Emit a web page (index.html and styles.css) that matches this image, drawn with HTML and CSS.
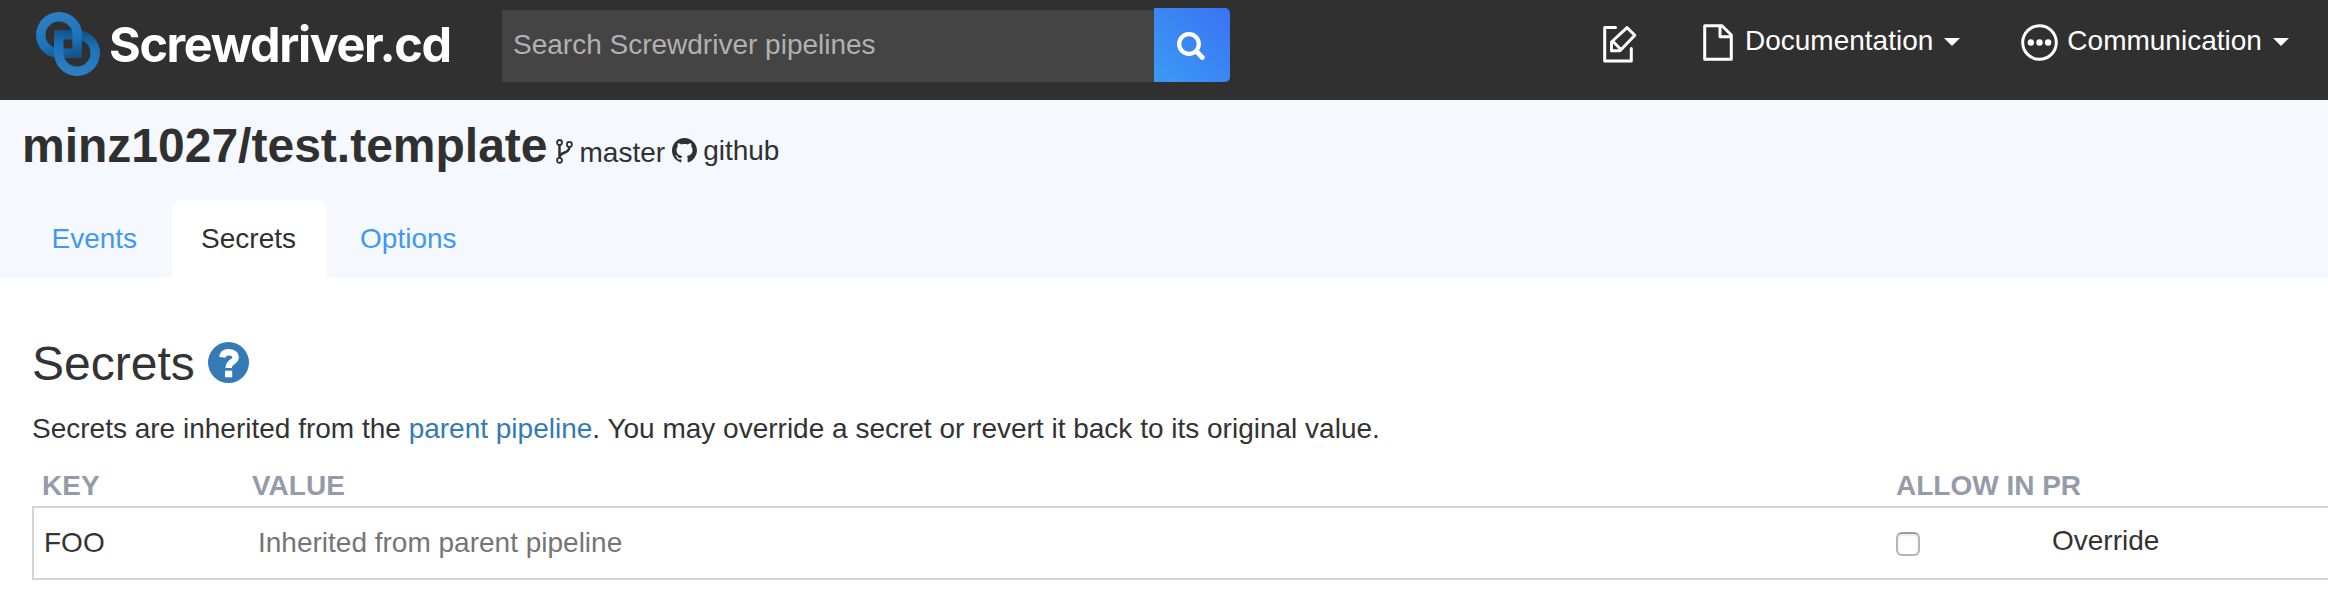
FILE: index.html
```html
<!DOCTYPE html>
<html lang="en">
<head>
<meta charset="utf-8">
<title>Screwdriver.cd</title>
<link rel="stylesheet" href="styles.css">
</head>
<body>
<header class="navbar">
  <a class="brand">
    <svg class="brand-mark" viewBox="36 12 64 64" width="64" height="64">
      <defs>
        <linearGradient id="ringA" gradientUnits="userSpaceOnUse" x1="54" y1="12" x2="68" y2="60">
          <stop offset="0" stop-color="#2f80c3"/><stop offset=".6" stop-color="#1b74bc"/><stop offset="1" stop-color="#125083"/>
        </linearGradient>
        <linearGradient id="ringB" gradientUnits="userSpaceOnUse" x1="77" y1="30" x2="73" y2="76">
          <stop offset="0" stop-color="#125083"/><stop offset=".38" stop-color="#1b74bc"/><stop offset="1" stop-color="#2f80c3"/>
        </linearGradient>
        <clipPath id="crossing"><rect x="72" y="20" width="11" height="25"/></clipPath>
        <path id="link" fill-rule="evenodd" d="M59 12A23 23 0 0 1 82 35V58H59A23 23 0 0 1 59 12ZM59 21.5A13.5 13.5 0 0 0 59 48.5H72.5V35A13.5 13.5 0 0 0 59 21.5Z"/>
      </defs>
      <use href="#link" fill="url(#ringA)"/>
      <path fill="url(#ringB)" fill-rule="evenodd" d="M77 76A23 23 0 0 1 54 53V30H77A23 23 0 0 1 77 76ZM77 66.5A13.5 13.5 0 0 0 77 39.5H63.5V53A13.5 13.5 0 0 0 77 66.5Z"/>
      <use href="#link" fill="url(#ringA)" clip-path="url(#crossing)"/>
    </svg>
    <span class="brand-name">Screwdriver.cd</span>
  </a>
  <form class="search">
    <div class="search-field">Search Screwdriver pipelines</div>
    <div class="search-button">
      <svg viewBox="0 0 28 28" width="28" height="28" fill="none" stroke="#fff" stroke-linecap="round">
        <circle cx="12" cy="12" r="9.8" stroke-width="4.2"/><path d="M19.5 19.5L25.3 25.5" stroke-width="4.8"/>
      </svg>
    </div>
  </form>
  <nav class="menu">
    <a class="menu-create">
      <svg viewBox="0 0 34 38" width="34" height="38" fill="none" stroke="#fff" stroke-width="3" stroke-linecap="round" stroke-linejoin="round">
        <path d="M12.5 2.5H1.7V36H28.3V23.5M8.5 25.7V17L24 2.6L31.8 10.2L17 25.7ZM10 16.5L18 24.5"/>
      </svg>
    </a>
    <a class="menu-item menu-docs">
      <svg class="menu-icon" viewBox="0 0 30 37" width="30" height="37" fill="none" stroke="#fff" stroke-width="3" stroke-linejoin="round">
        <path d="M1.7 1.7H19L28.3 11V35.2H1.7ZM17 2V12.8H28"/>
      </svg>
      <span>Documentation</span><i class="caret"></i>
    </a>
    <a class="menu-item menu-comm">
      <svg class="menu-icon" viewBox="0 0 37 37" width="37" height="37" fill="#fff">
        <circle cx="18.5" cy="18.5" r="16.8" fill="none" stroke="#fff" stroke-width="3"/>
        <circle cx="9.9" cy="18.5" r="3.2"/><circle cx="18.5" cy="18.5" r="3.2"/><circle cx="27.1" cy="18.5" r="3.2"/>
      </svg>
      <span>Communication</span><i class="caret"></i>
    </a>
  </nav>
</header>

<section class="pipeline">
  <div class="pipeline-head">
    <h1 class="pipeline-name">minz1027/test.template</h1>
    <svg class="branch-icon" viewBox="0 0 17 25" width="17" height="25" fill="none" stroke="#303030">
      <g stroke-width="1.8"><circle cx="3.5" cy="3.5" r="2.5"/><circle cx="3.5" cy="21.3" r="2.5"/><circle cx="13.4" cy="5.4" r="2.5"/></g>
      <path d="M3.5 6.3V18.6M13.3 8.2C13.3 15.5 4 12 3.7 18" stroke-width="2.5"/>
    </svg>
    <span class="branch">master</span>
    <svg class="scm-icon" viewBox="0 0 16 16" width="25" height="25" fill="#303030">
      <path d="M8 0C3.58 0 0 3.58 0 8c0 3.54 2.29 6.53 5.47 7.59.4.07.55-.17.55-.38 0-.19-.01-.82-.01-1.49-2.01.37-2.53-.49-2.69-.94-.09-.23-.48-.94-.82-1.13-.28-.15-.68-.52-.01-.53.63-.01 1.08.58 1.23.82.72 1.21 1.87.87 2.33.66.07-.52.28-.87.51-1.07-1.78-.2-3.64-.89-3.64-3.95 0-.87.31-1.59.82-2.15-.08-.2-.36-1.02.08-2.12 0 0 .67-.21 2.2.82.64-.18 1.32-.27 2-.27s1.36.09 2 .27c1.53-1.04 2.2-.82 2.2-.82.44 1.1.16 1.92.08 2.12.51.56.82 1.27.82 2.15 0 3.07-1.87 3.75-3.65 3.95.29.25.54.73.54 1.48 0 1.07-.01 1.93-.01 2.2 0 .21.15.46.55.38A8.01 8.01 0 0 0 16 8c0-4.42-3.58-8-8-8z"/>
    </svg>
    <span class="scm">github</span>
  </div>
  <div class="tabs">
    <a class="tab">Events</a>
    <a class="tab tab-active">Secrets</a>
    <a class="tab">Options</a>
  </div>
</section>

<main class="secrets">
  <div class="secrets-head">
    <h2 class="secrets-title">Secrets</h2>
    <svg class="help-icon" viewBox="0 0 41 41" width="41" height="41">
      <circle cx="20.5" cy="20.5" r="20.5" fill="#337ab7"/>
      <path d="M14.4 15.4C14.8 11.6 17.2 10.2 20.6 10.2C24.8 10.2 27.6 12.2 27.6 15.4C27.6 20 20.6 19.6 20.6 26" fill="none" stroke="#fff" stroke-width="6.4"/>
      <rect x="17" y="28.7" width="7.2" height="6.6" fill="#fff"/>
    </svg>
  </div>
  <p class="secrets-text">Secrets are inherited from the <a class="link">parent pipeline</a>. You may override a secret or revert it back to its original value.</p>
  <div class="grid grid-head">
    <span>KEY</span><span>VALUE</span><span>ALLOW IN PR</span>
  </div>
  <div class="grid grid-row">
    <span class="cell-key">FOO</span>
    <span class="cell-value">Inherited from parent pipeline</span>
    <span class="cell-allow"><i class="checkbox"></i></span>
    <span class="cell-action">Override</span>
  </div>
</main>
</body>
</html>
```
FILE: styles.css
```css
* { box-sizing: border-box; }
html { overflow: hidden; }
body {
  margin: 0;
  font: 28px/40px "Liberation Sans", Arial, sans-serif;
  color: #303030;
  background: #fff;
  white-space: nowrap;
  overflow: hidden;
}
svg { display: block; flex: none; }
h1, h2, p { margin: 0; }

.navbar {
  display: flex;
  align-items: flex-start;
  height: 100px;
  background: #303030;
  color: #fff;
}
.brand { display: flex; width: 502px; padding: 12px 0 0 36px; }
.brand-name {
  margin: 3px 0 0 9px;
  font: bold 48.5px/60px Inter, sans-serif;
  letter-spacing: -1.35px;
}
.search { display: flex; align-items: flex-end; margin-top: 8px; }
.search-field {
  width: 652px;
  height: 72px;
  padding-left: 11px;
  line-height: 69px;
  background: #444;
  color: #b1b1b1;
}
.search-button {
  width: 76px;
  height: 74px;
  padding: 24px 0 0 23px;
  border-radius: 0 5px 5px 0;
  background: linear-gradient(45deg, #3c9bf4, #3a72f3);
}
.menu { display: flex; flex: 1; align-items: flex-start; }
.menu-create { margin: 25px 0 0 373px; }
.menu-item { display: flex; align-items: flex-start; margin-top: 21px; }
.menu-icon { margin-top: 3px; }
.menu-docs { margin-left: 66px; }
.menu-docs span { margin-left: 12px; }
.menu-comm { margin-left: 61px; }
.menu-comm span { margin-left: 9px; }
.caret {
  margin: 17px 0 0 11px;
  border: 8px solid transparent;
  border-top-color: #fff;
  border-bottom: 0;
}

.pipeline { height: 178px; background: #f5f8ff; }
.pipeline-head { display: flex; align-items: flex-start; height: 100px; padding-left: 22px; }
.pipeline-name { margin-top: 19px; font-size: 48px; line-height: 53px; }
.branch-icon { margin: 39px 0 0 8px; }
.branch { margin: 33px 0 0 7px; }
.scm-icon { margin: 38px 0 0 7px; }
.scm { margin: 31px 0 0 6px; }
.tabs { display: flex; gap: 5px; padding-left: 22px; }
.tab {
  height: 78px;
  padding: 19px 29.5px 0;
  border-radius: 8px 8px 0 0;
  color: #3f98f1;
}
.tab-active { background: #fff; color: #303030; }

.secrets { padding: 59px 0 0 32px; color: #333; }
.secrets-head { display: flex; align-items: flex-start; }
.secrets-title { font-size: 48px; font-weight: normal; line-height: 53px; }
.help-icon { margin: 5px 0 0 13px; }
.secrets-text { margin-top: 19px; }
.link { color: #337ab7; }
.grid { display: grid; grid-template-columns: 220px 1642px 156px 1fr; }
.grid-head {
  grid-template-columns: 210px 1644px 1fr;
  margin-top: 17px;
  padding-left: 10px;
  color: #969ba9;
  font-weight: bold;
}
.grid-row {
  width: 2400px;
  height: 74px;
  border: 2px solid #d5d5d5;
}
.cell-key { padding: 15px 0 0 10px; }
.cell-value { padding: 15px 0 0 4px; color: #757575; }
.cell-allow { padding-top: 24px; }
.checkbox {
  display: block;
  width: 24px;
  height: 24px;
  border: 2px solid #b5b5b5;
  border-top-color: #9c9c9c;
  border-radius: 6px;
  box-shadow: inset 0 2px 2px #e8e8e8;
}
.cell-action { padding-top: 13px; }
```
